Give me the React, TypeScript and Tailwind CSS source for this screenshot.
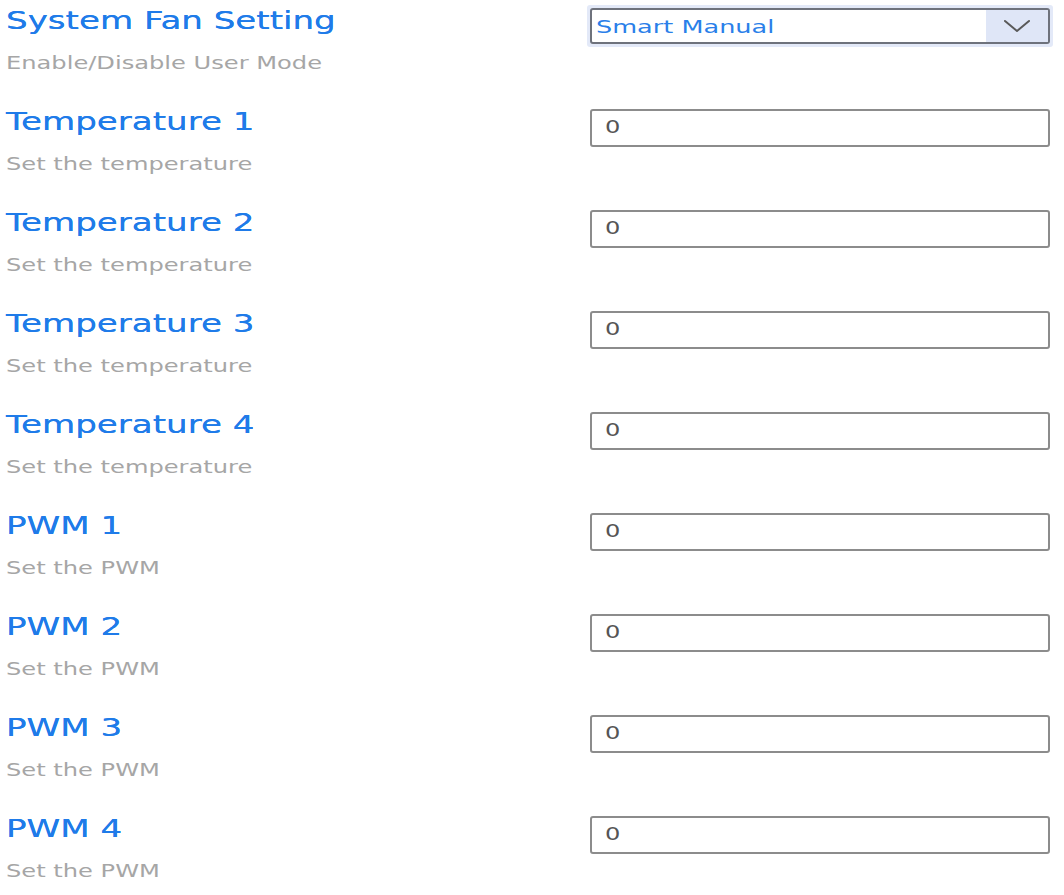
import React from "react";

type Row = {
  title: string;
  hint: string;
};

const rows: Row[] = [
  { title: "Temperature 1", hint: "Set the temperature" },
  { title: "Temperature 2", hint: "Set the temperature" },
  { title: "Temperature 3", hint: "Set the temperature" },
  { title: "Temperature 4", hint: "Set the temperature" },
  { title: "PWM 1", hint: "Set the PWM" },
  { title: "PWM 2", hint: "Set the PWM" },
  { title: "PWM 3", hint: "Set the PWM" },
  { title: "PWM 4", hint: "Set the PWM" },
];

// the capture is stretched sideways, so the glyphs are widened to match
const Wide = ({ children }: { children: React.ReactNode }) => (
  <span className="inline-block origin-left scale-x-[1.42] whitespace-nowrap">
    {children}
  </span>
);

const Label = ({ title, hint }: Row) => (
  <div className="flex flex-col pl-[6px] pt-[6px]">
    <div className="h-[30px] text-[24px] leading-[30px] text-[#1f7be9] [text-shadow:0_0_0.4px_#1f7be9]">
      <Wide>{title}</Wide>
    </div>
    <div className="mt-[15px] h-[24px] text-[17px] leading-[24px] text-[#a6a6a6]">
      <Wide>{hint}</Wide>
    </div>
  </div>
);

const FanSelect = () => (
  <div className="rounded-[3px] bg-[#e3e9f8] p-[3px]">
    <div className="flex h-[36px] w-[460px] items-stretch overflow-hidden rounded-[3px] border-2 border-[#6e727c] bg-white">
      <div className="flex flex-1 items-center pl-[4px] text-[18px] text-[#2a7fe9]">
        <Wide>Smart Manual</Wide>
      </div>
      <div className="flex w-[62px] items-center justify-center bg-[#dfe6f7]">
        <svg width="28" height="14" viewBox="0 0 28 14" fill="none">
          <path
            d="M2 2 L14 12 L26 2"
            stroke="#5a5a5a"
            strokeWidth="2"
            strokeLinecap="round"
            strokeLinejoin="round"
          />
        </svg>
      </div>
    </div>
  </div>
);

const NumberBox = () => (
  <div className="flex h-[38px] w-[460px] items-center rounded-[3px] border-2 border-[#8c8c8c] bg-white pl-[13px] text-[17px] text-[#555555]">
    <Wide>0</Wide>
  </div>
);

export default function App() {
  return (
    <div className="min-h-[895px] w-[1064px] bg-white font-['DejaVu_Sans',sans-serif]">
      <div className="flex h-[101px] justify-between pr-[11px]">
        <Label title="System Fan Setting" hint="Enable/Disable User Mode" />
        <div className="pt-[5px]">
          <FanSelect />
        </div>
      </div>
      {rows.map((row) => (
        <div key={row.title} className="flex h-[101px] justify-between pr-[14px]">
          <Label title={row.title} hint={row.hint} />
          <div className="pt-[8px]">
            <NumberBox />
          </div>
        </div>
      ))}
    </div>
  );
}
